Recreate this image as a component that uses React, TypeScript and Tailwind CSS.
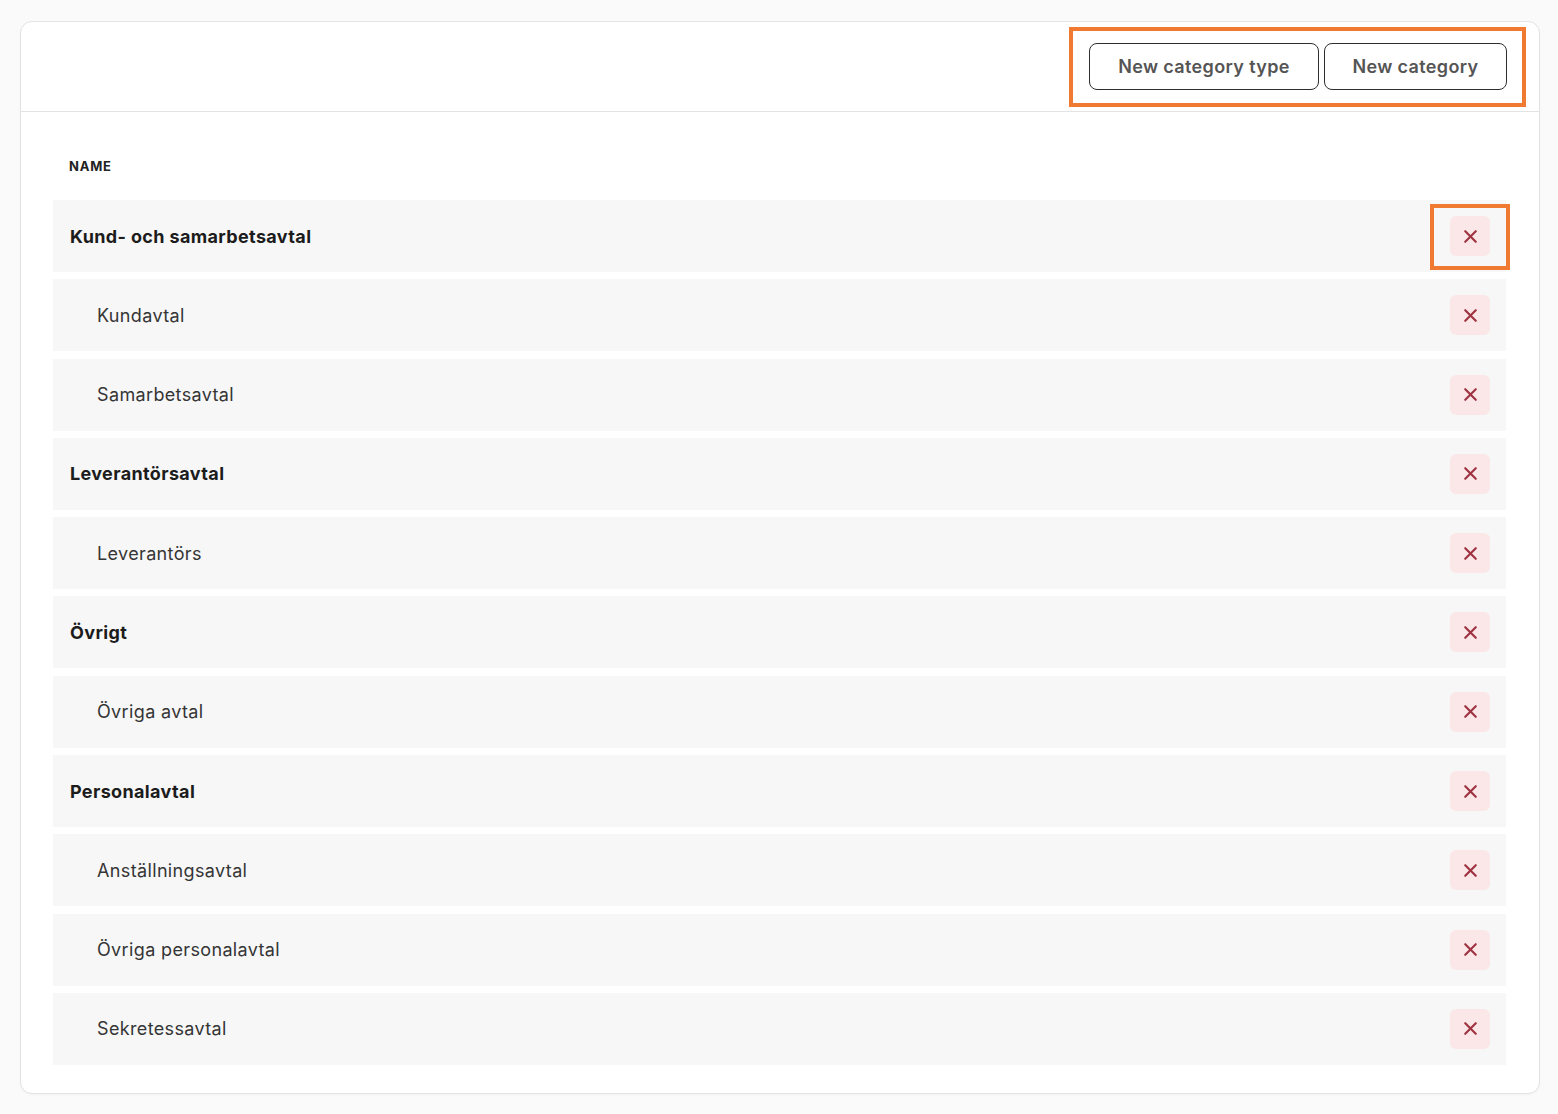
import { X } from "lucide-react";

type Category = {
  name: string;
  parent?: boolean;
};

const categories: Category[] = [
  { name: "Kund- och samarbetsavtal", parent: true },
  { name: "Kundavtal" },
  { name: "Samarbetsavtal" },
  { name: "Leverantörsavtal", parent: true },
  { name: "Leverantörs" },
  { name: "Övrigt", parent: true },
  { name: "Övriga avtal" },
  { name: "Personalavtal", parent: true },
  { name: "Anställningsavtal" },
  { name: "Övriga personalavtal" },
  { name: "Sekretessavtal" },
];

const DeleteButton = ({ highlight }: { highlight?: boolean }) => (
  <div className="relative">
    <button className="w-10 h-10 rounded-md bg-[#fbe7e8] flex items-center justify-center text-[#9e3441]">
      <X size={21} strokeWidth={2.5} />
    </button>
    {highlight && (
      <div className="absolute -left-5 -right-5 -top-3 -bottom-[14px] border-4 border-[#f07a32] pointer-events-none" />
    )}
  </div>
);

const App = () => {
  return (
    <div
      className="min-h-screen bg-[#fafafa] pl-5 pr-[18px] pt-[21px] pb-5"
      style={{ fontFamily: "Inter, 'Noto Sans', sans-serif" }}
    >
      <div className="bg-white border border-[#e3e3e3] rounded-xl shadow-[0_1px_2px_rgba(0,0,0,0.03)]">
        <div className="h-[90px] border-b border-[#e3e3e3] flex items-center justify-end pr-[32px]">
          <div className="relative flex gap-[5px]">
            <button className="h-[47px] w-[230px] rounded-lg border border-[#2e2e2e] text-[18px] tracking-[0.02em] font-semibold text-[#555]">
              New category type
            </button>
            <button className="h-[47px] w-[183px] rounded-lg border border-[#2e2e2e] text-[18px] tracking-[0.02em] font-semibold text-[#555]">
              New category
            </button>
            <div className="absolute -left-5 -right-[19px] -top-4 -bottom-[17px] border-4 border-[#f07a32] pointer-events-none" />
          </div>
        </div>
        <div className="pl-[32px] pr-[33px] pb-[28px]">
          <div className="h-[88px] pt-[46px] pl-4 text-[13px] leading-4 font-bold tracking-[0.06em] text-[#222]">
            NAME
          </div>
          <div className="flex flex-col gap-[7.3px]">
            {categories.map((c, i) => (
              <div
                key={c.name}
                className={
                  (c.parent ? "pl-[17px] font-bold text-[#1c1c1c] " : "pl-[44px] text-[#353535] ") +
                  "h-[72px] bg-[#f7f7f7] flex items-center justify-between pr-4 text-[18px] tracking-[0.02em]"
                }
              >
                <span>{c.name}</span>
                <DeleteButton highlight={i === 0} />
              </div>
            ))}
          </div>
        </div>
      </div>
    </div>
  );
};

export default App;
